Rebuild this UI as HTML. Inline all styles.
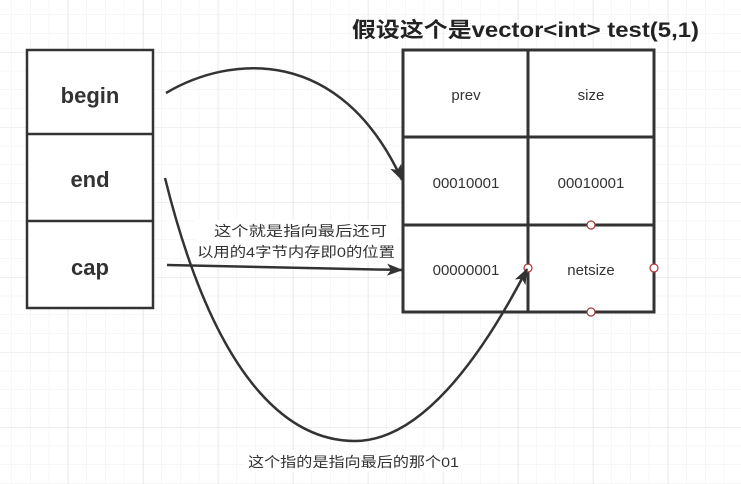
<!DOCTYPE html>
<html><head><meta charset="utf-8"><style>
html,body{margin:0;padding:0;width:741px;height:484px;overflow:hidden;background:#fff}
</style></head><body>
<svg width="741" height="484" xmlns="http://www.w3.org/2000/svg" style="display:block">
<defs>
<pattern id="minor" width="18.75" height="18.75" patternUnits="userSpaceOnUse" x="11.25" y="14.5">
<path d="M0 0H18.75M0 0V18.75" stroke="#efefef" stroke-width="1" fill="none"/>
</pattern>
<pattern id="major" width="75" height="75" patternUnits="userSpaceOnUse" x="68" y="52">
<path d="M0 0H75M0 0V75" stroke="#e2e2e2" stroke-width="1" fill="none"/>
</pattern>
<marker id="ah" markerWidth="16" markerHeight="12" refX="15" refY="6" orient="auto" markerUnits="userSpaceOnUse">
<path d="M0 0L16 6L0 12L4 6Z" fill="#333"/>
</marker>
</defs>
<rect width="741" height="484" fill="url(#minor)"/>
<rect width="741" height="484" fill="url(#major)"/>

<g stroke="#333" stroke-width="2.5" fill="#fff">
<rect x="27" y="50" width="126" height="258"/>
<path d="M27 134H153M27 221H153" fill="none"/>
</g>
<g font-family="Liberation Sans, sans-serif" font-weight="bold" font-size="22" fill="#333" text-anchor="middle">
<text x="90" y="103">begin</text>
<text x="90" y="187">end</text>
<text x="90" y="275">cap</text>
</g>

<g stroke="#333" stroke-width="3" fill="#fff">
<rect x="403" y="50" width="251" height="262"/>
<path d="M528 50V312M403 137H654M403 225H654" fill="none"/>
</g>
<g font-family="Liberation Sans, sans-serif" font-size="15" fill="#333" text-anchor="middle">
<text x="466" y="100">prev</text>
<text x="591" y="100">size</text>
<text x="466" y="188">00010001</text>
<text x="591" y="188">00010001</text>
<text x="466" y="275">00000001</text>
<text x="591" y="275">netsize</text>
</g>
<g fill="#fff" stroke="#a33" stroke-width="1.2">
<circle cx="591" cy="225" r="4"/>
<circle cx="528" cy="268" r="4"/>
<circle cx="654" cy="268" r="4"/>
<circle cx="591" cy="312" r="4"/>
</g>

<text x="352" y="37" textLength="347" lengthAdjust="spacingAndGlyphs" font-family="Liberation Sans, 'Noto Sans CJK SC', sans-serif" font-weight="bold" font-size="21" fill="#222">假设这个是vector&lt;int&gt; test(5,1)</text>

<g stroke="#333" stroke-width="2.5" fill="none">
<path d="M166 93C230 55 340 45 402 180" marker-end="url(#ah)"/>
<path d="M165 178C220 400 300 441 355 441C420 441 480 360 527 269" marker-end="url(#ah)"/>
<path d="M167 265L402 270" marker-end="url(#ah)"/>
</g>

<rect x="195" y="220" width="203" height="42" fill="#fff"/>
<g font-family="Liberation Sans, 'Noto Sans CJK SC', sans-serif" font-size="14" fill="#333">
<text x="214" y="236" textLength="173" lengthAdjust="spacingAndGlyphs">这个就是指向最后还可</text>
<text x="197" y="257" textLength="198" lengthAdjust="spacingAndGlyphs">以用的4字节内存即0的位置</text>
</g>
<rect x="245" y="450" width="218" height="22" fill="#fff"/>
<text x="248" y="467" textLength="211" lengthAdjust="spacingAndGlyphs" font-family="Liberation Sans, 'Noto Sans CJK SC', sans-serif" font-size="14" fill="#333">这个指的是指向最后的那个01</text>
</svg>
</body></html>
